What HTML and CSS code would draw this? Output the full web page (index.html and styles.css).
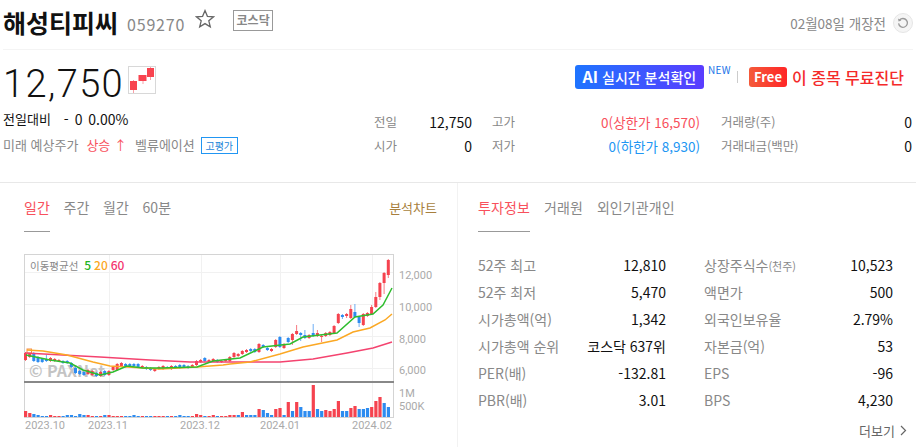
FILE: index.html
```html
<!DOCTYPE html>
<html lang="ko">
<head>
    <meta charset="UTF-8">
    <title>해성티피씨</title>
    <link rel="stylesheet" href="styles.css">
</head>
<body>
    <div class="head">
        <h1 class="name">해성티피씨</h1>
        <span class="code">059270</span>
        <svg class="star" width="20" height="20" viewBox="0 0 20 20"><path d="M10 1.6l2.4 5.700 6.100.5-4.700 4 1.500 6-5.300-3.200-5.300 3.200 1.500-6-4.700-4 6.100-.5z" fill="none" stroke="#666" stroke-width="1.3"/></svg>
        <span class="market">코스닥</span>
        <span class="date">02월08일 개장전</span>
        <span class="refresh">
            <svg width="12" height="12" viewBox="0 0 12 12"><path d="M2.500 3.200A4.400 4.400 0 1 1 1.600 6.400" fill="none" stroke="#999" stroke-width="1.3"/><path d="M1 1.400l.6 3 2.800-.9z" fill="#999"/></svg>
        </span>
    </div>

    <div class="summary">
        <div class="quote">
            <div class="price-row">
                <span class="price">12,750</span>
                <svg class="mini" width="28" height="28" viewBox="0 0 28 28">
                    <rect x=".5" y=".5" width="27" height="27" fill="#fff" stroke="#d8d8d8"/>
                    <path d="M5.500 14v13M15 9v9M22.500 1v13" stroke="#f9a0a8"/>
                    <rect x="2" y="15" width="7" height="9" fill="#f8434f"/>
                    <rect x="10.500" y="9" width="8" height="6" fill="#f8434f"/>
                    <rect x="19" y="2" width="7" height="9" fill="#f8434f"/>
                </svg>
            </div>
            <div class="change"><span>전일대비</span><span class="change-val">- 0 0.00%</span></div>
            <div class="forecast">
                <span class="muted">미래 예상주가</span>
                <span class="up">상승 ↑</span>
                <span class="muted valuation">벨류에이션</span>
                <span class="grade">고평가</span>
            </div>
        </div>
        <div class="side">
            <div class="promo">
                <span class="ai-btn"><b>AI</b> 실시간 분석확인</span>
                <span class="new">NEW</span>
                <span class="sep"></span>
                <span class="free">Free</span>
                <span class="free-text">이 종목 무료진단</span>
            </div>
            <div class="stats">
                <span class="muted">전일</span><span class="num">12,750</span>
                <span class="muted">고가</span><span class="num up">0(상한가 16,570)</span>
                <span class="muted">거래량(주)</span><span class="num">0</span>
                <span class="muted">시가</span><span class="num">0</span>
                <span class="muted">저가</span><span class="num down">0(하한가 8,930)</span>
                <span class="muted">거래대금(백만)</span><span class="num">0</span>
            </div>
        </div>
    </div>

    <div class="lower">
        <div class="panel-left">
            <div class="tabs">
                <span class="tab active">일간</span>
                <span class="tab">주간</span>
                <span class="tab">월간</span>
                <span class="tab">60분</span>
                <span class="tab-right">분석차트</span>
            </div>
            <svg class="chart" width="416" height="182" viewBox="24 254 416 182">
                <g stroke="#f1f1f1" fill="none">
                    <path d="M25 272.500H393M25 304.500H393M25 336.500H393M25 368.500H393"/>
                    <path d="M109.500 255V417M201.500 255V417M280.500 255V417M372.500 255V417"/>
                </g>
                <rect x="24.500" y="254.500" width="369" height="163" fill="none" stroke="#d4d4d4"/>
                <g id="volumes"></g>
                <path d="M24 382H394" stroke="#888" stroke-width="2"/>
                <text class="mark" x="29" y="377">© PAXNet</text>
                <g id="candles"></g>
                <rect x="27" y="349" width="4.500" height="4" fill="none" stroke="#f58a4a"/>
                <polyline class="ma" stroke="#f4436f" points="25,353 100,357 150,360 190,362 230,362 280,362 313,359 347,353 373,348 392,342"/>
                <polyline class="ma" stroke="#fba824" points="27,350 43,351 67,355 93,362 110,366 127,367 160,369 197,367 223,365 230,364 250,362 280,354 303,347 337,340 353,332 370,328 385,320 392,314"/>
                <polyline class="ma" stroke="#2ebd2e" points="26,355 50,360 70,363 83,370 100,375 113,372 127,366 143,368 160,368 197,367 213,361 240,358 263,347 290,344 303,337 337,333 355,317 373,314 383,305 392,288"/>
                <text class="legend" x="30" y="270">이동평균선 <tspan class="ma5" dx="3">5</tspan> <tspan class="ma20">20</tspan> <tspan class="ma60">60</tspan></text>
                <g class="axis">
                    <text x="399" y="279">12,000</text>
                    <text x="399" y="311">10,000</text>
                    <text x="399" y="343">8,000</text>
                    <text x="399" y="374">6,000</text>
                    <text x="399" y="397">1M</text>
                    <text x="399" y="410">500K</text>
                    <text x="25" y="429">2023.10</text>
                    <text x="88" y="429">2023.11</text>
                    <text x="180" y="429">2023.12</text>
                    <text x="260" y="429">2024.01</text>
                    <text x="352" y="429">2024.02</text>
                </g>
            </svg>
        </div>
        <div class="panel-right">
            <div class="tabs tabs-info">
                <span class="tab active">투자정보</span>
                <span class="tab">거래원</span>
                <span class="tab">외인기관개인</span>
            </div>
            <div class="info">
                <span class="muted">52주 최고</span><span class="num">12,810</span>
                <span class="muted">상장주식수<small>(천주)</small></span><span class="num">10,523</span>
                <span class="muted">52주 최저</span><span class="num">5,470</span>
                <span class="muted">액면가</span><span class="num">500</span>
                <span class="muted">시가총액(억)</span><span class="num">1,342</span>
                <span class="muted">외국인보유율</span><span class="num">2.79%</span>
                <span class="muted">시가총액 순위</span><span class="num">코스닥 637위</span>
                <span class="muted">자본금(억)</span><span class="num">53</span>
                <span class="muted">PER(배)</span><span class="num">-132.81</span>
                <span class="muted">EPS</span><span class="num">-96</span>
                <span class="muted">PBR(배)</span><span class="num">3.01</span>
                <span class="muted">BPS</span><span class="num">4,230</span>
            </div>
            <div class="more">더보기 <svg width="7" height="11" viewBox="0 0 7 11"><path d="M1 1l4.500 4.500L1 10" fill="none" stroke="#666" stroke-width="1.2"/></svg></div>
        </div>
    </div>

    <script src="chart.js"></script>
</body>
</html>
```

FILE: styles.css
```css
* {
    box-sizing: border-box;
}
body {
    margin: 0;
    height: 447px;
    overflow: hidden;
    background: #fff;
    color: #111;
    font-family: "Noto Sans CJK KR", "Noto Sans", sans-serif;
    font-size: 13px;
}
.muted {
    color: #888;
}
.up {
    color: #f8505c;
}
.down {
    color: #2196f3;
}
.num {
    text-align: right;
}

.head {
    display: flex;
    align-items: center;
    height: 50px;
    margin: 0 3px;
    padding-bottom: 5px;
    border-bottom: 1px solid #f4f4f4;
}
.name {
    margin: 0;
    font-size: 25px;
    font-weight: 700;
    line-height: 34px;
}
.code {
    margin: 3px 0 0 9px;
    color: #888;
    font-size: 16px;
    letter-spacing: .8px;
}
.star {
    margin: -6px 0 0 10px;
}
.market {
    margin: -3px 0 0 18px;
    width: 40px;
    height: 21px;
    border: 1px solid #999;
    color: #888;
    font-size: 12px;
    font-weight: 700;
    line-height: 18px;
    text-align: center;
}
.date {
    margin: 2px 0 0 auto;
    color: #888;
    font-size: 13.5px;
}
.refresh {
    display: flex;
    align-items: center;
    justify-content: center;
    width: 20px;
    height: 20px;
    margin: 2px 0 0 7px;
    border: 1px solid #e6e6e6;
    border-radius: 50%;
    background: #f5f5f5;
}

.summary {
    display: flex;
    justify-content: space-between;
    height: 133px;
    padding: 0 3px;
    border-bottom: 1px solid #e8e8e8;
}
.quote {
    width: 360px;
    padding-left: 4px;
}
.price-row {
    display: flex;
    align-items: flex-start;
    height: 57px;
    padding-top: 16px;
}
.price {
    margin-left: -4px;
    font-family: Roboto, sans-serif;
    font-size: 38px;
    font-weight: 300;
    line-height: 36px;
    letter-spacing: 1.4px;
}
.mini {
    margin-left: 4px;
}
.change {
    display: flex;
    margin-left: -4px;
    line-height: 24px;
}
.change-val {
    margin-left: 13px;
    font-size: 14px;
    word-spacing: 2px;
}
.forecast {
    display: flex;
    align-items: center;
    margin: 3px 0 0 -4px;
    line-height: 22px;
}
.forecast .up {
    margin-left: 8px;
}
.valuation {
    margin-left: 8px;
}
.grade {
    margin-left: 6px;
    width: 37px;
    height: 17px;
    border: 1px solid #2196f3;
    color: #1c86d8;
    font-size: 10px;
    line-height: 15px;
    text-align: center;
}

.side {
    width: 547px;
}
.promo {
    display: flex;
    align-items: center;
    justify-content: flex-end;
    height: 28px;
    margin-top: 13px;
    padding-right: 9px;
}
.ai-btn {
    width: 129px;
    height: 24px;
    border-radius: 3px;
    background: linear-gradient(90deg, #1e74ff, #5a3cff);
    color: #fff;
    font-size: 14px;
    font-weight: 500;
    line-height: 23px;
    text-align: center;
}
.ai-btn b {
    font-size: 16px;
}
.new {
    margin: -16px 0 0 4px;
    color: #1a73e8;
    font-size: 10px;
    letter-spacing: .4px;
}
.sep {
    width: 1px;
    height: 12px;
    margin: 0 11px 0 6px;
    background: #ccc;
}
.free {
    width: 38px;
    height: 20px;
    border-radius: 3px;
    background: linear-gradient(90deg, #f45a3a, #ff2626);
    color: #fff;
    font-size: 13px;
    font-weight: 700;
    line-height: 19px;
    text-align: center;
}
.free-text {
    margin-left: 5px;
    color: #f42a2a;
    font-size: 16px;
    font-weight: 500;
}
.stats {
    display: grid;
    grid-template-columns: 48px 50px 20px 40px 168px 21px 100px 91px;
    grid-auto-rows: 24px;
    margin: 19px 0 0 8px;
    font-size: 12.5px;
    line-height: 24px;
}
.stats .num {
    font-size: 14px;
}
.stats .up, .stats .down {
    font-size: 13.5px;
}
.stats > :nth-child(3), .stats > :nth-child(9) {
    grid-column: 4;
}
.stats > :nth-child(5), .stats > :nth-child(11) {
    grid-column: 7;
}

.lower {
    display: flex;
    height: 264px;
}
.panel-left {
    width: 458px;
    border-right: 1px solid #f2f2f2;
}
.panel-right {
    flex: 1;
    padding-left: 20px;
}
.tabs {
    display: flex;
    align-items: flex-start;
    gap: 13.500px;
    height: 71px;
    padding: 12px 20px 0 24px;
    line-height: 25px;
}
.tabs-info {
    gap: 14px;
    padding-left: 0;
}
.tab {
    height: 37px;
    color: #888;
    font-size: 14px;
    letter-spacing: .1px;
}
.tab.active {
    border-bottom: 1px solid #999;
    color: #f8505c;
}
.tab-right {
    margin-left: auto;
    color: #a87f3d;
    font-size: 13px;
}
.chart {
    display: block;
    margin-left: 24px;
}
.ma {
    fill: none;
    stroke-width: 1.500;
}
.mark {
    fill: #c4c4c4;
    font-size: 16px;
    font-weight: 700;
}
.legend {
    fill: #888;
    font-size: 10.5px;
}
.ma5, .ma20, .ma60 {
    font-size: 12px;
    font-weight: 500;
}
.ma5 {
    fill: #22b422;
}
.ma20 {
    fill: #fba824;
}
.ma60 {
    fill: #f4366f;
}
.axis {
    fill: #aaa;
    font-family: Roboto, sans-serif;
    font-size: 11px;
}

.info {
    display: grid;
    grid-template-columns: 90px 98px 38px 110px 79px;
    grid-auto-rows: 27px;
    margin-top: -2px;
    font-size: 14px;
    line-height: 27px;
}
.info > :nth-child(4n+3) {
    grid-column: 4;
}
.info small {
    font-size: 11px;
}
.more {
    display: flex;
    align-items: center;
    justify-content: flex-end;
    gap: 5px;
    margin: 7px 9px 0 0;
    color: #666;
    font-size: 13px;
}
```

FILE: chart.js
```js
// r = red candle, b = blue candle; values are y positions on the chart
const early = [
    [353,360,'r'],[354,357,'r'],[353,361,'b'],[357,362,'b'],[359,362,'b'],[359,361,'b',355],[358,361,'r'],[359,361,'r'],
    [360,361,'r'],[361,363,'b'],[361,363,'b'],[363,367,'b'],[368,373,'b'],[371,374,'b'],[372,375,'b'],[370,374,'r'],
    [371,375,'r'],[373,376,'b'],[372,376,'r'],[371,375,'b'],[371,375,'r'],[367,370,'r'],[364,370,'r'],[363,366,'r'],
    [364,366,'b'],[364,366,'b'],[364,366,'b'],[364,367,'b'],[366,367,'r'],[367,369,'b'],[368,370,'b'],[369,371,'r'],
    [367,369,'r'],[366,369,'r'],[367,368,'b'],[366,369,'r'],[366,368,'b'],[365,368,'b'],[365,367,'b'],[366,368,'b'],
    [365,367,'r'],[361,365,'r'],[360,362,'r'],[358,361,'b'],[360,362,'r'],[359,361,'r'],[360,362,'b'],[361,362,'r'],
    [360,361,'r'],[357,361,'r']
];
const late = [
    [353,357,'r'],[354,356,'r'],[351,354,'r'],[350,352,'r'],[349,351,'b'],[349,352,'b'],[344,352,'r'],[345,347,'b'],
    [348,350,'b'],[349,351,'r'],[340,347,'r'],[337,347,'b'],[344,348,'r'],[338,342,'b'],[334,340,'r',null,345],[331,334,'r',325],
    [333,335,'b',null,341],[335,338,'b',330],[335,338,'r'],[333,336,'b',324],[333,336,'r',330],[336,337,'r',null,342],[333,336,'r'],[332,335,'r'],
    [326,333,'r'],[314,323,'r'],[315,317,'b',null,319],[314,316,'r',null,318],[309,318,'r',305],[312,317,'b',304],[317,323,'b',null,327],[314,325,'r'],
    [313,316,'r'],[307,314,'r',305],[297,307,'r',292],[283,297,'r',null,300],[273,283,'r',null,294],[260,275,'r',null,278]
];
const earlyVols = [
    411,413,414,415,416,416,415,416,416,416,415,415,416,414,415,415,416,416,416,415,415,416,416,416,416,
    416,415,416,416,416,416,416,416,416,416,416,416,415,416,416,416,414,415,416,416,415,416,416,416,415
];
const lateVols = [
    415,415,412,415,415,415,409,410,413,415,409,408,415,402,411,402,407,411,411,
    385,409,411,410,411,409,401,411,411,408,406,409,409,408,407,401,397,403,407
];
const lateVolColors = 'rbrbbbrbbbrrbrbrbbbrbbrrrrbbrrbbbrrrbb';
const colors = { r: '#f5434f', b: '#2d8cf0' };
const step = 4.17;

let candleSvg = '';
let volSvg = '';
early.concat(late).forEach((c, i) => {
    const x = 25.5 + i * step;
    const top = c[3] || c[0] - 1;
    const bottom = c[4] || c[1] + 1;
    candleSvg += `<path d="M${x.toFixed(1)} ${top}V${bottom}" stroke="${colors[c[2]]}" stroke-opacity=".7"/>`;
    candleSvg += `<rect x="${(x - 1.5).toFixed(1)}" y="${c[0]}" width="3" height="${c[1] - c[0]}" fill="${colors[c[2]]}"/>`;

    const isLate = i >= early.length;
    const volTop = isLate ? lateVols[i - early.length] : earlyVols[i];
    const volColor = isLate ? lateVolColors[i - early.length] : c[2];
    volSvg += `<rect x="${(x - 1.5).toFixed(1)}" y="${volTop}" width="3.2" height="${417 - volTop}" fill="${colors[volColor]}"/>`;
});
document.getElementById('candles').innerHTML = candleSvg;
document.getElementById('volumes').innerHTML = volSvg;
```
